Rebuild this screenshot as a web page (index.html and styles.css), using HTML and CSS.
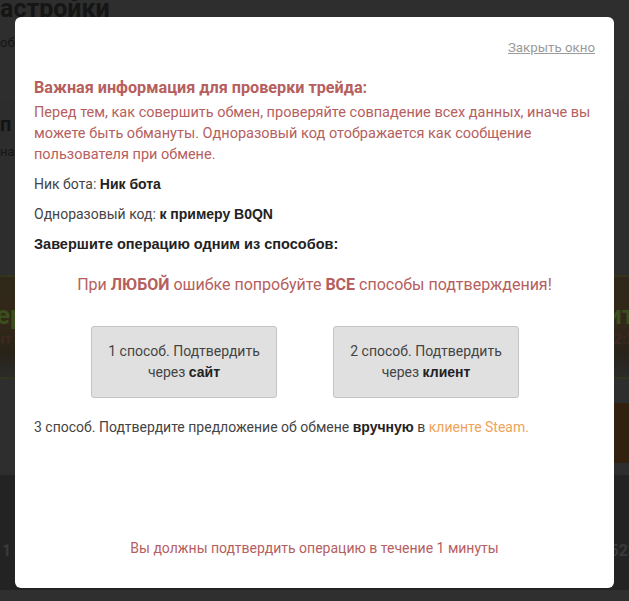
FILE: index.html
```html
<!DOCTYPE html>
<html lang="ru">
<head>
    <meta charset="UTF-8">
    <title>Настройки</title>
    <link rel="stylesheet" href="styles.css">
</head>
<body>

    <div class="page">
        <div class="band band-top">
            <h1 class="page-title">астройки</h1>
            <div class="page-sub">обм</div>
        </div>
        <div class="band band-mid">
            <div class="page-h2">п</div>
            <div class="page-sub">на</div>
        </div>
        <div class="band band-banner">
            <div class="banner-side">
                <span class="banner-text">ер</span>
                <span class="banner-small">нт</span>
            </div>
            <div class="banner-side right">
                <span class="banner-text">ит</span>
                <span class="banner-small">2:2</span>
            </div>
        </div>
        <div class="band band-gray">
            <div class="brown-box"></div>
        </div>
        <div class="band band-items">
            <span class="item-num">1</span>
            <span class="item-num">523</span>
        </div>
    </div>

    <div class="overlay">
        <div class="modal">
            <div class="modal-close"><a href="#">Закрыть окно</a></div>

            <h3 class="warn-title">Важная информация для проверки трейда:</h3>
            <p class="warn-text">Перед тем, как совершить обмен, проверяйте совпадение всех данных, иначе вы можете быть обмануты. Одноразовый код отображается как сообщение пользователя при обмене.</p>

            <p class="info">Ник бота: <b>Ник бота</b></p>
            <p class="info">Одноразовый код: <b>к примеру B0QN</b></p>
            <p class="info"><b class="wide">Завершите операцию одним из способов:</b></p>

            <p class="hint">При <b>ЛЮБОЙ</b> ошибке попробуйте <b>ВСЕ</b> способы подтверждения!</p>

            <div class="ways">
                <button class="way-btn">1 способ. Подтвердить через <b>сайт</b></button>
                <button class="way-btn">2 способ. Подтвердить через <b>клиент</b></button>
            </div>

            <p class="info">3 способ. Подтвердите предложение об обмене <b>вручную</b> в <a class="steam" href="#">клиенте Steam.</a></p>

            <p class="timer">Вы должны подтвердить операцию в течение 1 минуты</p>
        </div>
    </div>

</body>
</html>
```

FILE: styles.css
```css
html, body {
    margin: 0;
    padding: 0;
}
body {
    background: #2f2f2f;
    font-family: Roboto, "Liberation Sans", sans-serif;
    overflow: hidden;
}

/* dimmed page behind the popup */
.page {
    width: 629px;
    height: 601px;
}
.band { overflow: hidden; }
.band-top {
    height: 100px;
    background: #2e2e2e;
}
.page-title {
    margin: -6px 0 0 0;
    font-size: 25px;
    font-weight: bold;
    color: #151515;
}
.page-sub {
    margin-top: 12px;
    font-size: 13px;
    color: #151515;
}
.band-mid {
    height: 175px;
    background: #2d2d2d;
    border-bottom: 2px solid #33351f;
}
.page-h2 {
    margin-top: 12px;
    font-size: 20px;
    font-weight: bold;
    color: #141414;
}
.band-mid .page-sub { margin-top: 8px; }
.band-banner {
    height: 100px;
    background: linear-gradient(180deg, #2f2819 0%, #33281a 45%, #282318 75%, #2b2b2b 100%);
    display: flex;
    justify-content: space-between;
    align-items: center;
}
.banner-side {
    display: flex;
    flex-direction: column;
    margin-left: -4px;
    line-height: 24px;
}
.banner-side.right {
    margin: 0 -6px 0 0;
    align-items: flex-end;
}
.banner-text {
    font-size: 26px;
    font-weight: bold;
    color: #3a4f1d;
}
.banner-small {
    font-size: 15px;
    font-weight: bold;
    color: #3e2820;
}
.band-gray {
    height: 96px;
    background: #2e2e2e;
    border-top: 2px solid #323420;
    display: flex;
    justify-content: flex-end;
    align-items: center;
}
.brown-box {
    width: 15px;
    height: 60px;
    margin-top: 12px;
    background: #33210f;
}
.band-items {
    height: 115px;
    background: #232323;
    display: flex;
    justify-content: space-between;
    align-items: flex-end;
    padding-bottom: 30px;
    box-sizing: border-box;
}
.item-num {
    font-size: 16px;
    font-weight: bold;
    color: #3a3a3a;
    margin: 0 -8px 0 2px;
}

/* popup */
.overlay {
    position: fixed;
    left: 0;
    top: 0;
    right: 0;
    bottom: 0;
}
.modal {
    position: absolute;
    left: 15px;
    top: 17px;
    width: 561px;
    height: 571px;
    padding: 0 19px 0 19px;
    background: #fff;
    border-radius: 6px;
    color: #333;
    font-size: 14px;
}
.modal-close {
    text-align: right;
    padding-top: 21px;
    height: 20px;
    line-height: 18px;
}
.modal-close a {
    color: #9a9a9a;
    font-size: 13.3px;
}
.warn-title {
    margin: 19px 0 0 0;
    font-size: 16.2px;
    font-weight: bold;
    color: #b5605e;
    line-height: 22px;
}
.warn-text {
    margin: 3px 0 0 0;
    font-size: 14.5px;
    line-height: 21px;
    color: #b5605e;
}
.info {
    margin: 9px 0 0 0;
    line-height: 21px;
    color: #444;
}
.info b {
    font-family: "Liberation Sans", Arial, sans-serif;
    color: #222;
}
.info b.wide { font-size: 14.5px; }
.hint {
    margin: 18px 0 0 0;
    text-align: center;
    font-size: 16px;
    line-height: 24px;
    color: #b5605e;
}
.ways {
    display: flex;
    gap: 56px;
    padding-left: 57px;
    margin-top: 29px;
}
.way-btn {
    width: 186px;
    height: 72px;
    padding: 0 10px;
    background: #e0e0e0;
    border: 1px solid #c4c4c4;
    border-radius: 3px;
    font-family: Roboto, sans-serif;
    font-size: 14px;
    line-height: 21px;
    color: #444;
}
.way-btn b {
    font-family: "Liberation Sans", Arial, sans-serif;
    color: #222;
}
.ways + .info { margin-top: 19px; }
.steam {
    color: #f0a35a;
    text-decoration: none;
}
.timer {
    margin: 100px 0 0 0;
    text-align: center;
    font-size: 14px;
    line-height: 21px;
    color: #b5605e;
}
```
